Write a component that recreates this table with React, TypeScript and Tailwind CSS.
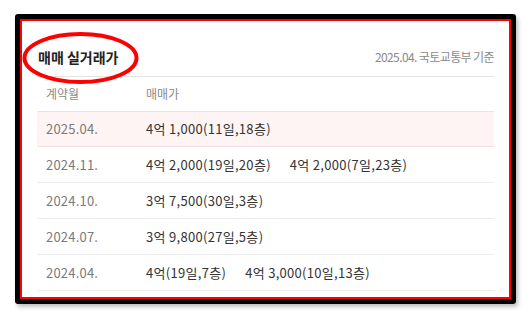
const ROWS = [
  { month: "2025.04.", deals: ["4억 1,000(11일,18층)"], highlight: true },
  { month: "2024.11.", deals: ["4억 2,000(19일,20층)", "4억 2,000(7일,23층)"] },
  { month: "2024.10.", deals: ["3억 7,500(30일,3층)"] },
  { month: "2024.07.", deals: ["3억 9,800(27일,5층)"] },
  { month: "2024.04.", deals: ["4억(19일,7층)", "4억 3,000(10일,13층)"] },
];

export default function App() {
  return (
    <div
      className="relative h-[321px] w-[532px] bg-white pl-[15px] pt-[14px]"
      style={{ fontFamily: '"Noto Sans CJK KR", "Noto Sans", sans-serif' }}
    >
      <div className="h-[290px] w-[501px] rounded-[3px] border-[5px] border-black shadow-[2px_3px_4px_rgba(0,0,0,0.25)]">
        <div className="h-full w-full border-2 border-[#ff0000] bg-white pl-[15px] pr-[15px]">
          <div className="flex items-center justify-between border-b border-[#e3e3e3] pb-[9px] pt-[26px]">
            <h3 className="pl-px text-[14px] font-bold leading-[20px] text-[#222]">매매 실거래가</h3>
            <span className="text-[12px] leading-[20px] tracking-[-0.6px] text-[#8a8a8a]">2025.04. 국토교통부 기준</span>
          </div>
          <div className="flex h-[34px] items-center text-[12px] text-[#8a8a8a]">
            <span className="w-[109px] pl-[9px]">계약월</span>
            <span>매매가</span>
          </div>
          {ROWS.map((row) => (
            <div
              key={row.month}
              className={`flex h-[36px] items-center border-b text-[13px] ${
                row.highlight
                  ? "border-t border-[#f8dfdd] bg-[#fdf4f3]"
                  : "border-[#ececec]"
              }`}
            >
              <span className="w-[109px] pl-[9px] tracking-[0.2px] text-[#7a7a7a]">{row.month}</span>
              <div className="flex gap-[19px] tracking-[0.3px] text-[#333]">
                {row.deals.map((d) => (
                  <span key={d}>{d}</span>
                ))}
              </div>
            </div>
          ))}
        </div>
      </div>
      <svg className="pointer-events-none absolute left-0 top-0" width="532" height="321">
        <ellipse cx="80.5" cy="58" rx="56" ry="24" fill="none" stroke="#ff0000" strokeWidth="4" />
      </svg>
    </div>
  );
}
